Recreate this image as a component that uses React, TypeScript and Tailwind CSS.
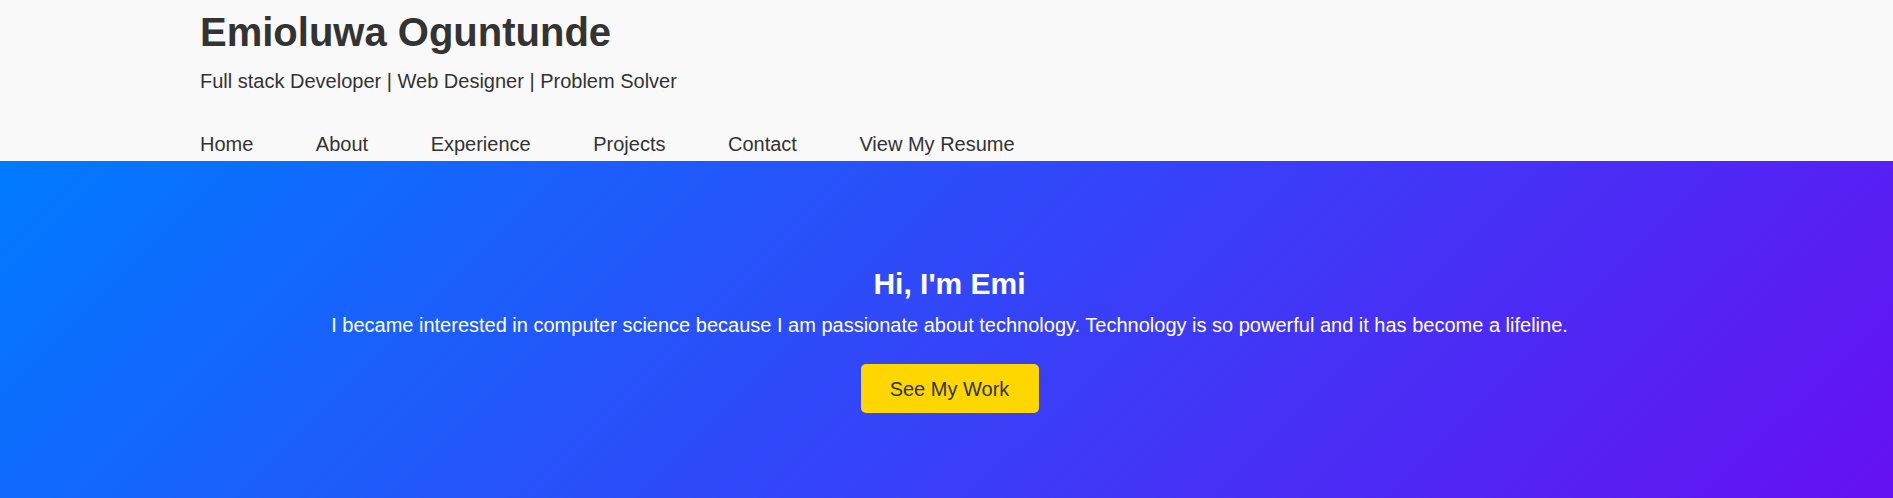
export default function App() {
  const nav = ["Home", "About", "Experience", "Projects", "Contact", "View My Resume"];
  return (
    <div className="min-h-screen w-full bg-white font-['Liberation_Sans',Arial,sans-serif] text-[#333]">
      {/* header */}
      <header className="bg-[#f9f9f9] pl-[200px] pt-[9px] pb-[5px]">
        <h1 className="text-[40px] leading-[46px] font-bold text-[#333]">Emioluwa Oguntunde</h1>
        <p className="mt-[15px] text-[20px] leading-[23px]">
          Full stack Developer | Web Designer | Problem Solver
        </p>
        <nav className="mt-[40px] flex gap-[62.5px] text-[20px] leading-[23px]">
          {nav.map((n) => (
            <a key={n} href="#" className="text-[#333]">
              {n}
            </a>
          ))}
        </nav>
      </header>

      {/* hero */}
      <section className="flex flex-col items-center bg-[linear-gradient(135deg,#007bff,#6610f2)] pt-[106px] pb-[85px] pl-[6px] text-center text-white">
        <h2 className="text-[30px] leading-[34px] font-bold">Hi, I'm Emi</h2>
        <p className="mt-[13px] text-[20px] leading-[23px]">
          I became interested in computer science because I am passionate about technology. Technology is so
          powerful and it has become a lifeline.
        </p>
        <button className="mt-[27px] h-[49px] w-[178px] rounded-[5px] bg-[#ffd700] text-[20px] text-[#333]">
          See My Work
        </button>
      </section>
    </div>
  );
}
